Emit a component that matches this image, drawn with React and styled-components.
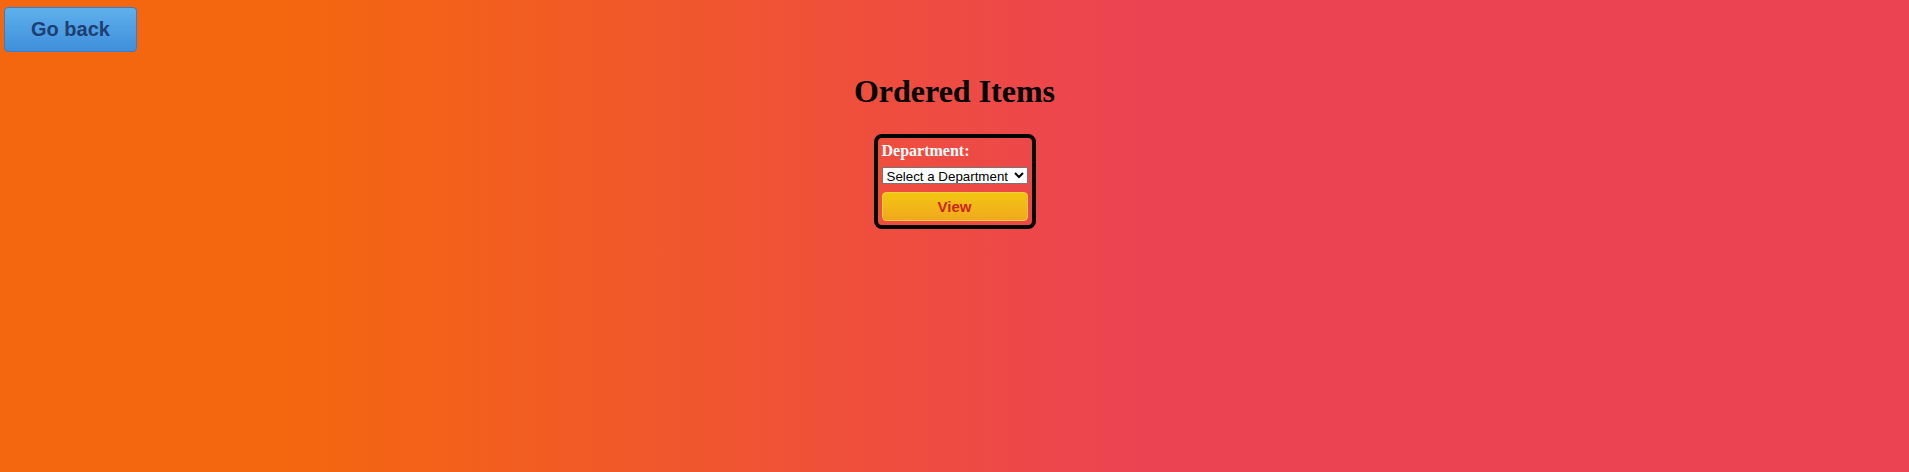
import styled, { createGlobalStyle } from 'styled-components';

const GlobalStyle = createGlobalStyle`
    html, body {
        margin: 0;
        padding: 0;
    }
    body {
        min-height: 472px;
        font-family: "Liberation Serif", "Times New Roman", serif;
        background: linear-gradient(to right, #f4670e 15%, #ec4352 60%);
    }
`;

const Page = styled.div`
    min-height: 472px;
`;

const TopBar = styled.div`
    padding: 7px 0 0 4px;
`;

const BackButton = styled.button`
    width: 133px;
    height: 45px;
    border: 1px solid #3b7cc6;
    border-radius: 4px;
    background: linear-gradient(to bottom, #5eb0ec, #3f8fdb);
    color: #1d3f72;
    font-family: "Liberation Sans", Arial, sans-serif;
    font-size: 20px;
    font-weight: bold;
    padding: 0;
    cursor: pointer;
`;

const Heading = styled.h1`
    text-align: center;
    font-size: 32px;
    font-weight: bold;
    color: #000;
    margin: 21px 0 24px;
`;

const FormBox = styled.form`
    width: 146px;
    margin: 0 auto;
    border: 4px solid #000;
    border-radius: 8px;
    padding: 4px;
    display: flex;
    flex-direction: column;
    box-sizing: content-box;
`;

const Label = styled.label`
    color: #fff;
    font-size: 16px;
    font-weight: bold;
    line-height: 18px;
`;

const Select = styled.select`
    margin-top: 7px;
    width: 146px;
    height: 17px;
    padding: 0;
    border: 1px solid #767676;
    border-radius: 0;
    background: #fff;
    color: #000;
    font-family: "Liberation Sans", Arial, sans-serif;
    font-size: 13.33px;
`;

const ViewButton = styled.button`
    margin-top: 8px;
    width: 146px;
    height: 29px;
    border: 1px solid #f5cf3c;
    border-radius: 4px;
    background: linear-gradient(to bottom, #f2c611, #f0a81e);
    color: #c8281e;
    font-family: "Liberation Sans", Arial, sans-serif;
    font-size: 15px;
    font-weight: bold;
    padding: 0;
    cursor: pointer;
`;

export default function App() {
    return (
        <Page>
            <GlobalStyle />
            <TopBar>
                <BackButton>Go back</BackButton>
            </TopBar>
            <Heading>Ordered Items</Heading>
            <FormBox onSubmit={(e) => e.preventDefault()}>
                <Label htmlFor="dept">Department:</Label>
                <Select id="dept" defaultValue="">
                    <option value="">Select a Department</option>
                </Select>
                <ViewButton type="submit">View</ViewButton>
            </FormBox>
        </Page>
    );
}
